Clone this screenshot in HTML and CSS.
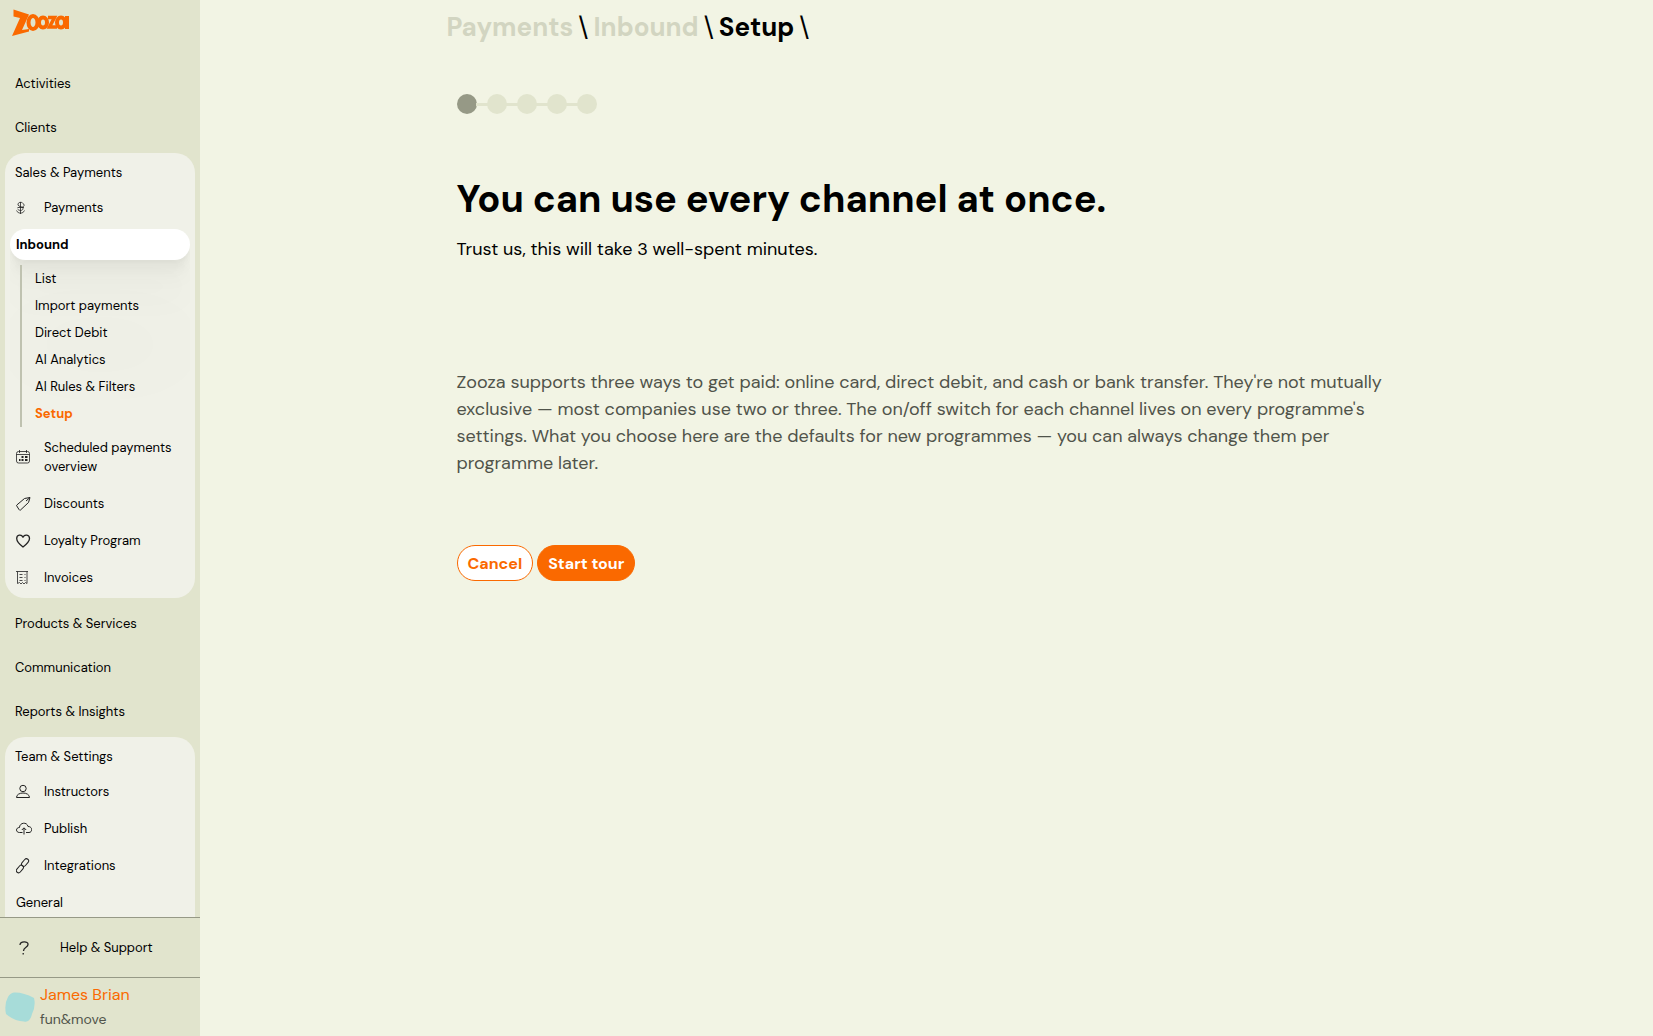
FILE: index.html
```html
<!DOCTYPE html>
<html lang="en">
<head>
  <meta charset="UTF-8">
  <meta name="viewport" content="width=device-width, initial-scale=1">
  <title>Setup - Inbound - Zooza</title>
  <link rel="stylesheet" href="styles.css">
</head>
<body>
  <div class="app">
    <aside class="sidebar">
      <a class="logo" href="#" aria-label="Zooza">
        <svg width="58" height="28" viewBox="0 0 58 28" fill="none" stroke="#fa6900" stroke-width="4">
          <path d="M1.500 1.500L17 6.500L10 22L17 21V23.500L0 28L8 10L1.500 8.500Z" fill="#fa6900" stroke="none"/>
          <ellipse cx="21" cy="14.500" rx="4.500" ry="6.500"/>
          <ellipse cx="31" cy="14.500" rx="4" ry="5"/>
          <path d="M36 9.500H42.500L37.500 19H45" stroke-width="3.500"/>
          <ellipse cx="49" cy="14.500" rx="4" ry="5"/>
          <path d="M55 8V21"/>
        </svg>
      </a>

      <nav class="nav">
        <a class="nav-heading" href="#">Activities</a>
        <a class="nav-heading" href="#">Clients</a>

        <div class="nav-group">
          <a class="nav-heading" href="#">Sales &amp; Payments</a>
          <div class="nav-items">
            <a class="nav-item" href="#">
              <svg class="icon thin" viewBox="0 0 16 16"><path d="M4.500 2V14M7 3.500C6 1.500 1.500 2 2 5C2.500 7 6.500 6 7 8.500C7 11 3 11 1.500 9M7 3.500C9 5 8 7 6 7M.5 10.500C2 14 7 14 8.500 10.500M1.500 7.500H8"/></svg>
              <span>Payments</span>
            </a>
            <a class="nav-item active" href="#">Inbound</a>
            <div class="subnav">
              <a href="#">List</a>
              <a href="#">Import payments</a>
              <a href="#">Direct Debit</a>
              <a href="#">AI Analytics</a>
              <a href="#">AI Rules &amp; Filters</a>
              <a class="current" href="#">Setup</a>
            </div>
            <a class="nav-item" href="#">
              <svg class="icon thin" viewBox="0 0 16 16"><rect x=".5" y="2.500" width="13" height="11.500" rx="2"/><path d="M.5 5.500H13.500M3.500 1V4M10.500 1V4"/><path d="M5.500 8H7.500M9 8H11.500M3 11H4.500M5.500 11H7.500M9 11H11.500" stroke-width="1.800"/></svg>
              <span>Scheduled payments overview</span>
            </a>
            <a class="nav-item" href="#">
              <svg class="icon" viewBox="0 0 16 16"><path d="M.8 9L8.500 2.500L14 1.500L12.500 6.500L4.500 14Q3.500 14.500 3 13.500L.8 10Q.3 9.500 .8 9ZM10 5L14 1.500"/></svg>
              <span>Discounts</span>
            </a>
            <a class="nav-item" href="#">
              <svg class="icon heart" viewBox="0 0 16 16"><path d="M7 14C2.500 10.500 .7 8.500 .7 5.500C.7 1.500 5.500 1 7 4.200C8.500 1 13.500 1.500 13.500 5.500C13.500 8.500 11.500 10.500 7 14Z"/></svg>
              <span>Loyalty Program</span>
            </a>
            <a class="nav-item" href="#">
              <svg class="icon thin" viewBox="0 0 16 16"><path d="M0 1.500H12M1.500 1.500V13.500L3.500 12.500L5 14L6.500 12.500L8 14L9.500 12.500L11 13.500V1.500"/><path d="M3.500 4.500H6.500M3.500 7.500H6.500M3.500 10.500H6.500M8.500 4.500H9.500M8.500 7.500H9.500M8.500 10.500H9.500"/></svg>
              <span>Invoices</span>
            </a>
          </div>
        </div>

        <a class="nav-heading" href="#">Products &amp; Services</a>
        <a class="nav-heading" href="#">Communication</a>
        <a class="nav-heading" href="#">Reports &amp; Insights</a>

        <div class="nav-group">
          <a class="nav-heading" href="#">Team &amp; Settings</a>
          <div class="nav-items">
            <a class="nav-item" href="#">
              <svg class="icon" viewBox="0 0 16 16"><circle cx="7" cy="4.500" r="3.200"/><path d="M.5 13.500C.5 7.500 13.500 7.500 13.500 13.500Z"/></svg>
              <span>Instructors</span>
            </a>
            <a class="nav-item" href="#">
              <svg class="icon" viewBox="0 0 16 16"><path d="M6.500 11.500H3.500C-.5 11.500 -.5 6.500 3.500 6.500C3.500 1.500 11 .5 12 5.500C17 5.500 16.500 11.500 13 11.500H10M8 13.500V7M5.800 9L8 6.800L10.200 9"/></svg>
              <span>Publish</span>
            </a>
            <a class="nav-item" href="#">
              <svg class="icon" viewBox="0 0 16 16"><rect x="-1" y="-2.200" width="8.500" height="4.400" rx="2.200" transform="translate(7 7) rotate(-50)"/><rect x="-7.500" y="-2.200" width="8.500" height="4.400" rx="2.200" transform="translate(6 8.500) rotate(-50)"/></svg>
              <span>Integrations</span>
            </a>
            <a class="nav-item" href="#">General</a>
          </div>
        </div>
      </nav>

      <a class="help" href="#">
        <svg class="icon" viewBox="0 0 16 16"><path d="M4 5C4 1 12.500 1 12 4.500C12 7.500 7.500 7 7.500 11M7.200 13V14.500" stroke-width="1.300"/></svg>
        <span>Help &amp; Support</span>
      </a>

      <div class="user">
        <svg class="avatar" width="30" height="30" viewBox="0 0 30 30"><path d="M9 .5Q18 0 29 6Q31 14 27 22Q25 31 19 29.500Q9 29 1 22Q-1 12 3 5Q5 1 9 .5Z"/></svg>
        <div>
          <a class="user-name" href="#">James Brian</a>
          <div class="user-company">fun&amp;move</div>
        </div>
      </div>
    </aside>

    <main class="main">
      <div class="breadcrumbs">
        <a href="#">Payments</a> \ <a href="#">Inbound</a> \ <span>Setup</span> \
      </div>

      <div class="wizard">
        <ol class="steps" aria-label="Steps">
          <li class="done"></li>
          <li></li>
          <li></li>
          <li></li>
          <li></li>
        </ol>

        <h1>You can use every channel at once.</h1>
        <p class="lead">Trust us, this will take 3 well-spent minutes.</p>

        <p class="description">Zooza supports three ways to get paid: online card, direct debit, and cash or bank transfer. They're not mutually exclusive — most companies use two or three. The on/off switch for each channel lives on every programme's settings. What you choose here are the defaults for new programmes — you can always change them per programme later.</p>

        <div class="actions">
          <button type="button" class="btn">Cancel</button>
          <button type="button" class="btn btn-primary">Start tour</button>
        </div>
      </div>
    </main>
  </div>
</body>
</html>
```
FILE: styles.css
```css
* {
  box-sizing: border-box;
}

body {
  margin: 0;
  font-family: "DM Sans", Inter, sans-serif;
  background-color: #f2f4e4;
  color: #000;
}

a {
  color: inherit;
  text-decoration: none;
}

.app {
  display: flex;
  height: 100vh;
}

/* Sidebar */
.sidebar {
  flex: 0 0 200px;
  display: flex;
  flex-direction: column;
  background-color: #e1e4cd;
  font-size: 13px;
  line-height: 19px;
}

.logo {
  flex: 0 0 64px;
  padding: 8px 12px;
}

.nav {
  flex: 1;
  min-height: 0;
  overflow-y: auto;
  scrollbar-width: none;
  padding: 0 5px;
}

.nav-heading {
  display: block;
  padding: 10px;
  margin-bottom: 5px;
}

.nav-group {
  margin: 6px 0;
  padding-bottom: 5px;
  border-radius: 20px;
  background-color: #f0f1e8;
}

.nav-group:last-child {
  padding-bottom: 30px;
}

.nav-group .nav-heading {
  margin-bottom: 0;
}

.nav-items {
  display: flex;
  flex-direction: column;
  gap: 6px;
  margin: 0 5px;
  overflow: hidden;
}

.nav-item {
  display: flex;
  align-items: center;
  gap: 12px;
  padding: 6px;
}

.nav-item.active {
  border-radius: 16px;
  background-color: #fff;
  font-weight: 700;
  box-shadow: 0 3px 3px rgba(0, 0, 0, 0.02),
    0 7px 6px rgba(0, 0, 0, 0.02),
    0 13px 10px rgba(0, 0, 0, 0.02),
    0 22px 18px rgba(0, 0, 0, 0.02),
    0 42px 34px rgba(0, 0, 0, 0.02),
    0 100px 80px rgba(0, 0, 0, 0.03);
}

.icon {
  flex: 0 0 16px;
  width: 16px;
  height: 16px;
  fill: none;
  stroke: #222;
  stroke-width: 1;
  stroke-linejoin: round;
}

.icon.thin {
  stroke-width: 0.8;
}

.icon.heart {
  stroke-width: 1.3;
}

.subnav {
  display: flex;
  flex-direction: column;
  margin: -1px 0 -1px 10px;
  padding-left: 13px;
  border-left: 2px solid #bfc2b0;
  position: relative;
}

.subnav a {
  padding: 4px 0;
}

.subnav .current {
  color: #fa6900;
  font-weight: 700;
}

.help {
  display: flex;
  align-items: center;
  gap: 28px;
  height: 60px;
  padding: 0 16px;
  border-top: 1px solid #969986;
}

.user {
  display: flex;
  align-items: center;
  gap: 5px;
  height: 59px;
  padding: 0 5px;
  border-top: 1px solid #969986;
}

.avatar {
  fill: #a7dcd9;
}

.user-name {
  font-size: 16px;
  line-height: 24px;
  color: #fa6900;
}

.user-company {
  font-size: 14px;
  line-height: 24px;
  color: #50534a;
}

/* Content */
.main {
  flex: 1;
  padding: 0 20px;
}

.breadcrumbs,
.wizard {
  max-width: 960px;
  margin: 0 auto;
}

.breadcrumbs {
  display: flex;
  gap: 5px;
  padding-top: 9px;
  font-size: 26px;
  font-weight: 400;
  line-height: 36px;
}

.breadcrumbs a {
  color: #d2d5c1;
  font-weight: 700;
}

.breadcrumbs span {
  font-weight: 700;
}

.wizard {
  padding: 49px 10px;
}

.steps {
  display: flex;
  gap: 10px;
  margin: 0;
  padding: 0;
  list-style: none;
}

.steps li {
  width: 20px;
  height: 20px;
  border-radius: 50%;
  background-color: #e1e4cd;
}

.steps li.done {
  background-color: #969986;
}

.steps li + li::before {
  content: "";
  display: block;
  width: 12px;
  height: 3px;
  margin: 9px 0 0 -11px;
  background-color: #e1e4cd;
}

h1 {
  margin: 61px 0 0;
  font-size: 38px;
  font-weight: 700;
  line-height: 48px;
}

.lead {
  margin: 13px 0 0;
  font-size: 18px;
  line-height: 27px;
}

.description {
  margin: 106px 0 0;
  font-size: 18px;
  line-height: 27px;
  color: #50534a;
}

.actions {
  display: flex;
  gap: 4px;
  margin-top: 68px;
}

.btn {
  height: 36px;
  padding: 0 10px;
  border: 1px solid #fa6900;
  border-radius: 18px;
  background-color: #fff;
  color: #fa6900;
  font-family: inherit;
  font-size: 16px;
  font-weight: 700;
}

.btn-primary {
  background-color: #fa6900;
  color: #fff;
}
```
